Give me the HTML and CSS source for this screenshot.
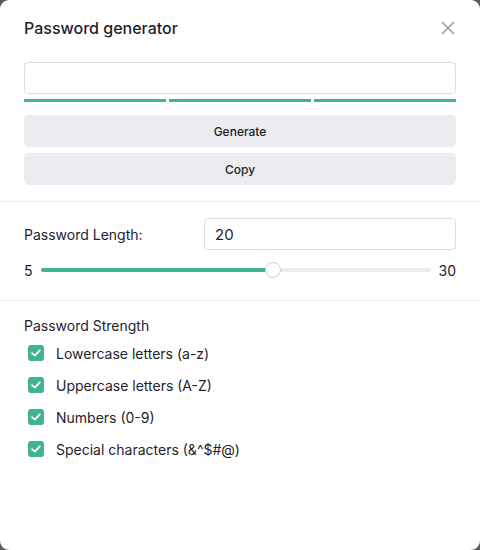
FILE: index.html
```html
<!DOCTYPE html>
<html>
<head>
<meta charset="utf-8">
<link rel="stylesheet" href="styles.css">
</head>
<body>
<div class="dialog">
  <div class="header">
    <h1 class="title">Password generator</h1>
    <button class="close" aria-label="Close">
      <svg width="14" height="14" viewBox="0 0 14 14"><path d="M1 1L13 13M13 1L1 13" stroke="#9a9a9e" stroke-width="1.6" fill="none"/></svg>
    </button>
  </div>
  <div class="section top">
    <input class="field" type="text" value="">
    <div class="meter"><span></span><span></span><span></span></div>
    <button class="btn">Generate</button>
    <button class="btn">Copy</button>
  </div>
  <div class="section length">
    <div class="len-row">
      <label class="len-label">Password Length:</label>
      <input class="field len-input" type="text" value="20">
    </div>
    <div class="slider-row">
      <span class="num">5</span>
      <div class="track"><div class="fill" style="width:59.6%"></div><div class="thumb" style="left:59.6%"></div></div>
      <span class="num">30</span>
    </div>
  </div>
  <div class="section strength">
    <div class="st-title">Password Strength</div>
    <label class="check"><span class="box"><svg width="10" height="8" viewBox="0 0 10 8"><path d="M1.2 4.2L3.8 6.6L8.8 1.4" stroke="#fff" stroke-width="1.8" fill="none" stroke-linecap="round" stroke-linejoin="round"/></svg></span>Lowercase letters (a-z)</label>
    <label class="check"><span class="box"><svg width="10" height="8" viewBox="0 0 10 8"><path d="M1.2 4.2L3.8 6.6L8.8 1.4" stroke="#fff" stroke-width="1.8" fill="none" stroke-linecap="round" stroke-linejoin="round"/></svg></span>Uppercase letters (A-Z)</label>
    <label class="check"><span class="box"><svg width="10" height="8" viewBox="0 0 10 8"><path d="M1.2 4.2L3.8 6.6L8.8 1.4" stroke="#fff" stroke-width="1.8" fill="none" stroke-linecap="round" stroke-linejoin="round"/></svg></span>Numbers (0-9)</label>
    <label class="check"><span class="box"><svg width="10" height="8" viewBox="0 0 10 8"><path d="M1.2 4.2L3.8 6.6L8.8 1.4" stroke="#fff" stroke-width="1.8" fill="none" stroke-linecap="round" stroke-linejoin="round"/></svg></span>Special characters (&amp;^$#@)</label>
  </div>
</div>
</body>
</html>
```
FILE: styles.css
```css
html, body {
  margin: 0;
  padding: 0;
  background: #5a5a5e;
}
body {
  font-family: Inter, "Noto Sans", sans-serif;
  color: #1f2329;
}
.dialog {
  width: 480px;
  height: 550px;
  background: #fff;
  border-radius: 9px;
  box-sizing: border-box;
  overflow: hidden;
}
.header {
  display: flex;
  align-items: center;
  justify-content: space-between;
  padding: 17px 24px 0 24px;
  height: 22px;
}
.title {
  margin: 0;
  font-size: 16px;
  font-weight: 500;
  line-height: 22px;
}
.close {
  border: 0;
  background: none;
  padding: 0;
  width: 14px;
  height: 14px;
  display: flex;
  margin-right: 1px;
}
.section {
  padding: 0 24px;
}
.top {
  padding-top: 23px;
  padding-bottom: 16px;
  border-bottom: 1px solid #ececef;
  display: flex;
  flex-direction: column;
}
.field {
  box-sizing: border-box;
  height: 32px;
  width: 100%;
  border: 1px solid #dcdde2;
  border-radius: 4px;
  font-family: Inter, sans-serif;
  font-size: 15px;
  padding: 0 14px;
  color: #1f2329;
  outline: none;
}
.meter {
  display: flex;
  gap: 3px;
  margin-top: 5px;
}
.meter span {
  flex: 1;
  height: 3px;
  background: #40b48e;
}
.btn {
  margin-top: 13px;
  height: 32px;
  border: 0;
  border-radius: 5px;
  background: #ebecf0;
  font-family: Inter, sans-serif;
  font-size: 12px;
  font-weight: 500;
  color: #1f2329;
}
.btn + .btn {
  margin-top: 6px;
}
.length {
  padding-top: 16px;
  padding-bottom: 19px;
  border-bottom: 1px solid #ececef;
}
.len-row {
  display: flex;
  align-items: center;
}
.len-label {
  flex: 0 0 180px;
  font-size: 14px;
}
.len-input {
  flex: 1;
  min-width: 0;
  width: auto;
  padding: 0 10px;
}
.slider-row {
  display: flex;
  align-items: center;
  margin-top: 9px;
  height: 22px;
}
.num {
  font-size: 14px;
}
.track {
  position: relative;
  flex: 1;
  height: 4px;
  border-radius: 2px;
  background: #ebecf0;
  margin: 0 8px 0 8px;
}
.fill {
  height: 4px;
  border-radius: 2px;
  background: #40b48e;
}
.thumb {
  position: absolute;
  top: -6px;
  width: 16px;
  height: 16px;
  margin-left: -8px;
  box-sizing: border-box;
  border: 1px solid #cfd0d6;
  border-radius: 50%;
  background: #fff;
}
.strength {
  padding-top: 16px;
}
.st-title {
  font-size: 14px;
  line-height: 18px;
  margin-bottom: 2px;
}
.check {
  display: flex;
  align-items: center;
  height: 32px;
  font-size: 14px;
  padding-left: 4px;
}
.box {
  width: 16px;
  height: 16px;
  border-radius: 3px;
  background: #40b48e;
  display: flex;
  align-items: center;
  justify-content: center;
  margin-right: 12px;
}
```
